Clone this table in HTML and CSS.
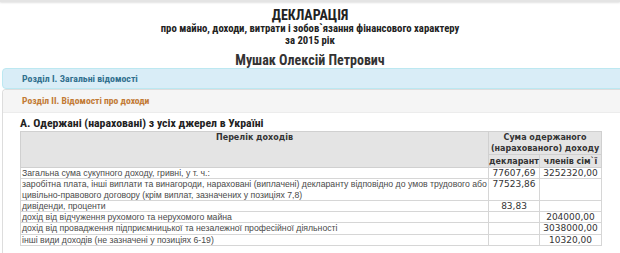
FILE: index.html
```html
<!DOCTYPE html>
<html lang="uk">
<head>
<meta charset="utf-8">
<title>Декларація</title>
<link rel="stylesheet" href="styles.css">
</head>
<body>
<div class="topbar"></div>
<header class="doc-head">
  <div class="doc-title">ДЕКЛАРАЦІЯ</div>
  <div class="doc-sub">про майно, доходи, витрати і зобов`язання фінансового характеру</div>
  <div class="doc-sub">за 2015 рік</div>
  <div class="doc-name">Мушак Олексій Петрович</div>
</header>
<section class="panel panel-info">
  <div class="panel-heading">Розділ I. Загальні відомості</div>
</section>
<section class="panel panel-default">
  <div class="panel-heading">Розділ II. Відомості про доходи</div>
  <div class="panel-body">
    <h3 class="sec-title">А. Одержані (нараховані) з усіх джерел в Україні</h3>
    <table class="income">
      <colgroup>
        <col class="c-name">
        <col class="c-decl">
        <col class="c-fam">
      </colgroup>
      <thead>
        <tr class="h1">
          <th rowspan="2" class="th-main">Перелік доходів</th>
          <th colspan="2">Сума одержаного (нарахованого) доходу</th>
        </tr>
        <tr class="h2">
          <th>декларант</th>
          <th>членів сім`ї</th>
        </tr>
      </thead>
      <tbody>
        <tr><td>Загальна сума сукупного доходу, гривні, у т. ч.:</td><td class="num">77607,69</td><td class="num">3252320,00</td></tr>
        <tr><td>заробітна плата, інші виплати та винагороди, нараховані (виплачені) декларанту відповідно до умов трудового або цивільно-правового договору (крім виплат, зазначених у позиціях 7,8)</td><td class="num">77523,86</td><td class="num"></td></tr>
        <tr><td>дивіденди, проценти</td><td class="num">83,83</td><td class="num"></td></tr>
        <tr><td>дохід від відчуження рухомого та нерухомого майна</td><td class="num"></td><td class="num">204000,00</td></tr>
        <tr><td>дохід від провадження підприємницької та незалежної професійної діяльності</td><td class="num"></td><td class="num">3038000,00</td></tr>
        <tr><td>інші види доходів (не зазначені у позиціях 6-19)</td><td class="num"></td><td class="num">10320,00</td></tr>
      </tbody>
    </table>
  </div>
</section>
</body>
</html>
```
FILE: styles.css
```css
html, body {
  margin: 0;
  padding: 0;
  background: #fff;
  overflow: hidden;
}
body {
  font-family: "Roboto Condensed", "Liberation Sans", Arial, sans-serif;
  color: #333;
  width: 620px;
}
.topbar {
  height: 2px;
  background: #e4e4e4;
  box-shadow: 0 1px 2px rgba(0, 0, 0, 0.12);
}
.doc-head {
  text-align: center;
  padding-top: 5px;
  color: #222;
}
.doc-title {
  font-size: 14px;
  font-weight: bold;
  line-height: 16px;
}
.doc-sub {
  font-size: 10.7px;
  font-weight: bold;
  line-height: 12px;
}
.doc-name {
  font-size: 14px;
  font-weight: bold;
  line-height: 16px;
  margin-top: 5px;
  color: #333;
}
.panel {
  margin-left: 2px;
  margin-right: -10px;
  border: 1px solid #ddd;
  border-radius: 4px 0 0 4px;
}
.panel-info {
  border-color: #bce8f1;
  background: #d9edf7;
}
.panel-info .panel-heading {
  color: #31708f;
  padding: 4px 0 4px 19px;
}
.panel-default {
  margin-top: 0;
  border-bottom: none;
  border-radius: 4px 0 0 0;
}
.panel-heading {
  font-size: 9.8px;
  font-weight: bold;
  line-height: 11px;
}
.panel-default .panel-heading {
  background: #f5f5f5;
  color: #c27a34;
  font-size: 9.6px;
  padding: 5px 0 6px 19px;
  border-bottom: 1px solid #ececec;
  border-radius: 4px 0 0 0;
}
.panel-body {
  padding: 3px 0 10px 17px;
}
.sec-title {
  margin: 0;
  font-size: 11.8px;
  font-weight: bold;
  line-height: 15px;
  color: #222;
}
.income {
  border-collapse: collapse;
  width: 582px;
  font-family: "DejaVu Sans", Verdana, sans-serif;
  font-size: 8px;
  color: #333;
}
.c-name { width: 469px; }
.c-decl { width: 51px; }
.c-fam { width: 62px; }
.income th {
  background: #e4e4e4;
  border: 1px solid #d0d0d0;
  font-weight: bold;
  text-align: center;
  vertical-align: top;
  line-height: 11px;
  padding: 0;
}
.income .h2 th {
  padding-top: 1px;
}
.income td {
  border: 1px solid #d6d6d6;
  line-height: 10.3px;
  padding: 0 0 0 1px;
  vertical-align: top;
  font-family: "Liberation Sans", Arial, sans-serif;
  font-size: 8.7px;
  color: #4a4a4a;
}
.income td.num {
  text-align: center;
  padding: 0;
  font-family: "DejaVu Sans", Verdana, sans-serif;
  font-size: 9px;
  color: #333;
}
```
